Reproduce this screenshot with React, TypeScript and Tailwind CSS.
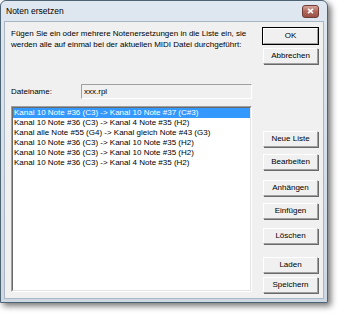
import React from 'react';

const font = { fontFamily: '"Liberation Sans", Arial, sans-serif' };

const btn =
  'flex h-[16px] w-[55px] items-center justify-center border border-t-white border-l-white border-r-[#a0a0a0] border-b-[#a0a0a0] bg-[#f0f0f0] text-[8px] leading-none text-black shadow-[1px_1px_0_#696969]';

const rows = [
  'Kanal 10 Note #36 (C3) -> Kanal 10 Note #37 (C#3)',
  'Kanal 10 Note #36 (C3) -> Kanal 4 Note #35 (H2)',
  'Kanal alle Note #55 (G4) -> Kanal gleich Note #43 (G3)',
  'Kanal 10 Note #36 (C3) -> Kanal 10 Note #35 (H2)',
  'Kanal 10 Note #36 (C3) -> Kanal 10 Note #35 (H2)',
  'Kanal 10 Note #36 (C3) -> Kanal 4 Note #35 (H2)',
];

// right column: label + top margin to the previous button
const buttons: { label: string; mt: string }[] = [
  { label: 'Neue Liste', mt: 'mt-[67px]' },
  { label: 'Bearbeiten', mt: 'mt-[7px]' },
  { label: 'Anhängen', mt: 'mt-[10px]' },
  { label: 'Einfügen', mt: 'mt-[7px]' },
  { label: 'Löschen', mt: 'mt-[9px]' },
  { label: 'Laden', mt: 'mt-[13px]' },
  { label: 'Speichern', mt: 'mt-[4px]' },
];

export default function App() {
  return (
    <div className="h-[314px] w-[338px] overflow-hidden bg-white" style={font}>
      <div className="flex h-[303px] w-[328px] flex-col rounded-t-[6px] border border-[#4d6474] bg-gradient-to-b from-[#dfe7f0] to-[#cdd8e3] shadow-[3px_3px_6px_rgba(0,0,0,0.55)]">
        {/* title bar */}
        <div className="flex h-[20px] items-center justify-between pl-[5px] pr-[8px]">
          <span className="text-[8.5px] text-black">Noten ersetzen</span>
          <div className="flex h-[13px] w-[17px] items-center justify-center rounded-[3px] border border-[#6e3b35] bg-gradient-to-b from-[#d7a59c] via-[#b0665b] to-[#9a5248]">
            <svg width="7" height="6" viewBox="0 0 7 6">
              <path d="M1 0.8 L6 5.2 M6 0.8 L1 5.2" stroke="white" strokeWidth="1.6" />
            </svg>
          </div>
        </div>

        {/* client area */}
        <div className="mx-[3px] mb-[3px] flex flex-1 border border-[#a9b6c4] bg-[#f0f0f0] pl-[6px] pt-[6px] text-[8px] text-black">
          <div className="flex w-[241px] flex-col">
            <p className="whitespace-nowrap leading-[11px]">
              Fügen Sie ein oder mehrere Notenersetzungen in die Liste ein, sie
              <br />
              werden alle auf einmal bei der aktuellen MIDI Datei durchgeführt:
            </p>

            <div className="mt-[34px] flex h-[15px] items-center">
              <span className="w-[70px]">Dateiname:</span>
              <div className="flex h-[15px] flex-1 items-center border border-t-[#a0a0a0] border-l-[#a0a0a0] border-r-white border-b-white bg-[#f0f0f0] pl-[2px]">
                xxx.rpl
              </div>
            </div>

            <div className="mt-[7px] h-[186px] border border-t-[#a0a0a0] border-l-[#a0a0a0] border-r-white border-b-white">
              <div className="h-full border border-t-[#696969] border-l-[#696969] border-r-[#e3e3e3] border-b-[#e3e3e3] bg-white">
                {rows.map((r, i) => (
                  <div
                    key={i}
                    className={
                      'h-[10px] whitespace-nowrap pl-[1px] leading-[10px] ' +
                      (i === 0 ? 'bg-[#3399ff] text-white' : 'text-black')
                    }
                  >
                    {r}
                  </div>
                ))}
              </div>
            </div>
          </div>

          <div className="ml-[11px] flex flex-col">
            <div className={btn + ' outline outline-1 outline-black'}>OK</div>
            <div className={btn + ' mt-[4px]'}>Abbrechen</div>
            {buttons.map((b) => (
              <div key={b.label} className={btn + ' ' + b.mt}>
                {b.label}
              </div>
            ))}
          </div>
        </div>
      </div>
    </div>
  );
}
